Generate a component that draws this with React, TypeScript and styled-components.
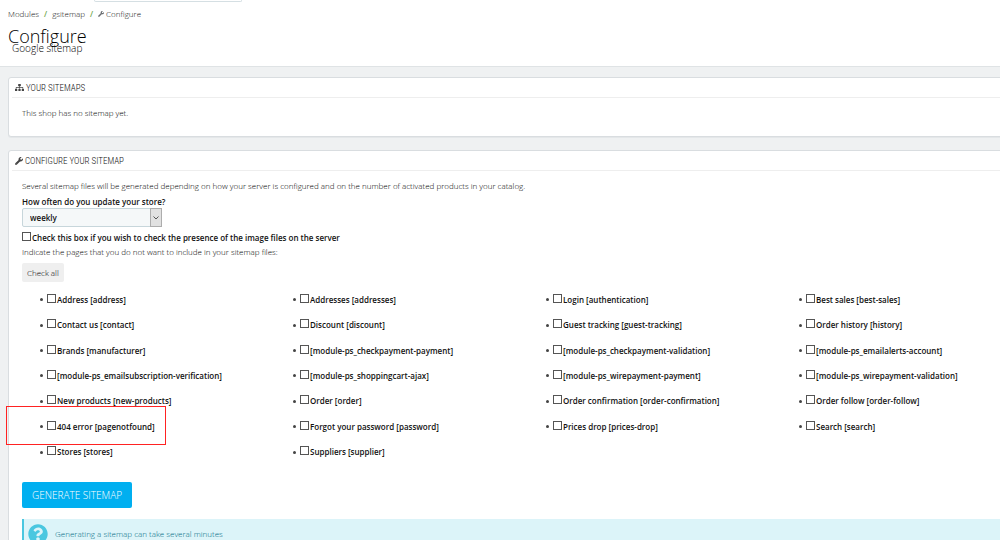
import React from "react";
import styled, { createGlobalStyle, css } from "styled-components";
import { FaQuestionCircle, FaSitemap, FaWrench } from "react-icons/fa";

const GlobalStyle = createGlobalStyle`
  *, *::before, *::after { box-sizing: border-box; }
  html { background: #eff1f2; }
  body {
    margin: 0;
    overflow: hidden;
    font-family: "Open Sans", "Noto Sans", sans-serif;
    font-size: 8px;
    font-weight: 300;
    line-height: 12px;
    color: #000;
  }
  button, select, input { font: inherit; color: inherit; margin: 0; }
`;

const Header = styled.header`
  background: #fff;
  border-bottom: 1px solid #dfe3e5;
  padding: 0 8px 12px;
`;

const SearchEdge = styled.div`
  width: 148px;
  height: 2px;
  margin-left: 86px;
  border: 1px solid #d5dfe3;
  border-top: 0;
  border-radius: 0 0 3px 3px;
`;

const Breadcrumb = styled.nav`
  display: flex;
  align-items: center;
  gap: 5px;
  padding-top: 6px;
  color: #111;
`;

const Crumb = styled.a`
  display: inline-flex;
  align-items: center;
  gap: 2px;
  color: inherit;
  text-decoration: none;
  svg { color: #6c6f73; }
`;

const Slash = styled.span`
  color: #72a850;
  font-weight: 600;
`;

const Title = styled.h1`
  margin: 5px 0 0;
  font-size: 18px;
  line-height: 22px;
  font-weight: 300;
  color: #000;
`;

const Subtitle = styled.h2`
  margin: -5px 0 0 4px;
  font-size: 10px;
  line-height: 12px;
  font-weight: 300;
  color: #000;
`;

const Main = styled.main`
  display: flex;
  flex-direction: column;
  gap: 13px;
  padding: 10px 0 0 8px;
  margin-right: -48px;
`;

const Panel = styled.section`
  background: #fff;
  border: 1px solid #d9dde0;
  border-radius: 3px;
  box-shadow: 0 1px 0 #e4e7e9;
  padding: 0 13px 17px;
`;

const PanelHeading = styled.h3`
  display: flex;
  align-items: center;
  gap: 2px;
  height: 20px;
  margin: 0 -10px 9px;
  padding-left: 3px;
  border-bottom: 1px solid #eee;
  font-family: "Ubuntu Condensed", "Roboto Condensed", "Open Sans", sans-serif;
  font-size: 9px;
  font-weight: 300;
  text-transform: uppercase;
  color: #111;
  svg { color: #444; }
`;

const Paragraph = styled.p`
  margin: 0;
`;

const Field = styled.div`
  display: flex;
  flex-direction: column;
  align-items: flex-start;
  margin-top: 4px;
  font-weight: 600;
  color: #111;
`;

const SelectBox = styled.span`
  position: relative;
  width: 140px;
`;

const Select = styled.select`
  display: block;
  appearance: none;
  width: 100%;
  height: 19px;
  padding: 0 20px 0 7px;
  border: 1px solid #c7d6db;
  border-radius: 2px;
  background: #f5f8f9;
`;

const SelectArrow = styled.span`
  position: absolute;
  top: 0;
  right: 0;
  bottom: 0;
  display: grid;
  place-items: center;
  width: 12px;
  border: 1px solid #adadad;
  background: #e1e1e1;
  pointer-events: none;
`;

const CheckLabel = styled.label`
  display: inline-flex;
  align-items: center;
  gap: 1px;
  font-weight: 600;
  color: #111;
  white-space: nowrap;
`;

const Checkbox = styled.input.attrs({ type: "checkbox" })`
  appearance: none;
  flex: none;
  width: 9px;
  height: 9px;
  margin-bottom: 3px;
  border: 1px solid #555;
  background: #fff;
  &:checked { background: #555; }
`;

const Option = styled.div`
  display: flex;
  margin: 5px 0 2px;
`;

const CheckAll = styled.button`
  height: 19px;
  margin-top: 5px;
  padding: 0 5px;
  border: 0;
  border-radius: 2px;
  background: #efefef;
`;

const PageList = styled.ul`
  display: grid;
  grid-template-columns: repeat(4, 1fr);
  grid-auto-rows: 1fr;
  min-height: 178px;
  margin: 5px 0 17px;
  padding: 0;
  list-style: none;
`;

const PageItem = styled.li<{ $outlined?: boolean }>`
  position: relative;
  display: flex;
  align-items: center;
  gap: 4px;
  padding-left: 18px;
  &::before {
    content: "";
    width: 3px;
    height: 3px;
    border-radius: 50%;
    background: #444;
  }
  ${(p) =>
    p.$outlined &&
    css`
      &::after {
        content: "";
        position: absolute;
        top: -8px;
        bottom: -5px;
        left: -16px;
        width: 160px;
        border: 1px solid #f22;
      }
    `}
`;

const Generate = styled.button`
  display: block;
  height: 26px;
  padding: 0 10px;
  border: 0;
  border-radius: 2px;
  background: #00aff0;
  color: #fff;
  font-size: 10px;
  text-transform: uppercase;
`;

const Alert = styled.div`
  display: flex;
  align-items: center;
  gap: 7px;
  height: 30px;
  margin-top: 11px;
  padding-left: 4px;
  border-left: 2px solid #4ac7e0;
  background: #dcf4f9;
  color: #006b82;
  svg { color: #4ac7e0; }
`;

const pages = [
  "Address [address]", "Addresses [addresses]", "Login [authentication]", "Best sales [best-sales]",
  "Contact us [contact]", "Discount [discount]", "Guest tracking [guest-tracking]", "Order history [history]",
  "Brands [manufacturer]", "[module-ps_checkpayment-payment]", "[module-ps_checkpayment-validation]", "[module-ps_emailalerts-account]",
  "[module-ps_emailsubscription-verification]", "[module-ps_shoppingcart-ajax]", "[module-ps_wirepayment-payment]", "[module-ps_wirepayment-validation]",
  "New products [new-products]", "Order [order]", "Order confirmation [order-confirmation]", "Order follow [order-follow]",
  "404 error [pagenotfound]", "Forgot your password [password]", "Prices drop [prices-drop]", "Search [search]",
  "Stores [stores]", "Suppliers [supplier]",
];

export default function App() {
  return (
    <>
      <GlobalStyle />
      <Header>
        <SearchEdge />
        <Breadcrumb aria-label="Breadcrumb">
          <Crumb href="#modules">Modules</Crumb>
          <Slash>/</Slash>
          <Crumb href="#gsitemap">gsitemap</Crumb>
          <Slash>/</Slash>
          <Crumb href="#configure"><FaWrench size={6} />Configure</Crumb>
        </Breadcrumb>
        <Title>Configure</Title>
        <Subtitle>Google sitemap</Subtitle>
      </Header>
      <Main>
        <Panel>
          <PanelHeading><FaSitemap size={9} />Your sitemaps</PanelHeading>
          <Paragraph>This shop has no sitemap yet.</Paragraph>
        </Panel>
        <Panel>
          <PanelHeading><FaWrench size={8} />Configure your sitemap</PanelHeading>
          <Paragraph>
            Several sitemap files will be generated depending on how your server is configured and on the number of activated products in your catalog.
          </Paragraph>
          <Field>
            <label htmlFor="frequency">How often do you update your store?</label>
            <SelectBox>
              <Select id="frequency" defaultValue="weekly">
                <option>always</option>
                <option>hourly</option>
                <option>daily</option>
                <option>weekly</option>
                <option>monthly</option>
                <option>yearly</option>
                <option>never</option>
              </Select>
              <SelectArrow>
                <svg width="6" height="4" viewBox="0 0 6 4" fill="none" stroke="#555">
                  <path d="M.5 .5 3 3 5.5 .5" />
                </svg>
              </SelectArrow>
            </SelectBox>
          </Field>
          <Option>
            <CheckLabel>
              <Checkbox />
              Check this box if you wish to check the presence of the image files on the server
            </CheckLabel>
          </Option>
          <Paragraph>Indicate the pages that you do not want to include in your sitemap files:</Paragraph>
          <CheckAll type="button">Check all</CheckAll>
          <PageList>
            {pages.map((page) => (
              <PageItem key={page} $outlined={page.startsWith("404")}>
                <CheckLabel><Checkbox />{page}</CheckLabel>
              </PageItem>
            ))}
          </PageList>
          <Generate type="button">Generate sitemap</Generate>
          <Alert role="note"><FaQuestionCircle size={20} />Generating a sitemap can take several minutes</Alert>
        </Panel>
      </Main>
    </>
  );
}
